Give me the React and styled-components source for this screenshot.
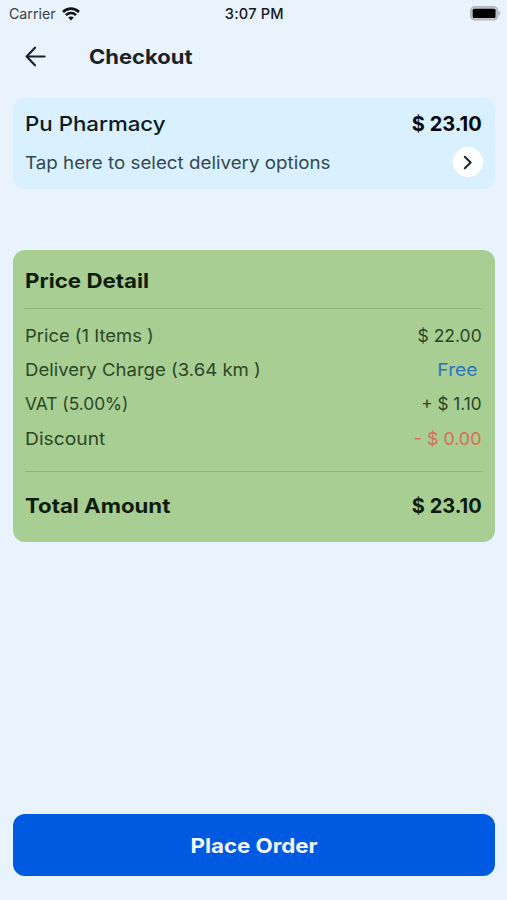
import React from 'react';
import styled, { createGlobalStyle } from 'styled-components';

const GlobalStyle = createGlobalStyle`
  * { box-sizing: border-box; }
  body { margin: 0; background: #e8f3fe; }
`;

const Screen = styled.main`
  display: flex;
  flex-direction: column;
  width: 100%;
  height: 100vh;
  min-height: 900px;
  padding: 0 12.5px 24.5px 13px;
  background: #e8f3fe;
  color: #202c31;
  font-family: Inter, "Noto Sans", sans-serif;
`;

const Text = styled.span`
  display: inline-block;
  font-size: ${(p) => p.$size || 17.5}px;
  font-weight: ${(p) => p.$weight || 400};
  letter-spacing: ${(p) => p.$track || 0}px;
  margin-right: ${(p) => -(p.$track || 0)}px;
  color: ${(p) => p.$color || 'inherit'};
  transform: scaleX(${(p) => p.$stretch || 1});
  transform-origin: ${(p) => p.$origin || 'left'} center;
  white-space: pre;
`;

const StatusBar = styled.div`
  display: grid;
  grid-template-columns: 1fr auto 1fr;
  align-items: center;
  height: 27px;
  margin: 0 -7px 0 -4px;
  color: #17191c;
`;

const Carrier = styled.div`
  display: flex;
  align-items: center;
  gap: 6px;
`;

const Clock = styled(Text)`
  margin-left: -2px;
`;

const Battery = styled.svg`
  justify-self: end;
`;

const Header = styled.header`
  display: flex;
  align-items: center;
  gap: 43px;
  height: 58px;
  padding-left: 12px;
  color: #1a2228;
`;

const BackButton = styled.button`
  display: flex;
  padding: 0;
  border: 0;
  background: none;
  color: inherit;
`;

const Title = styled(Text)`
  padding-top: 1px;
`;

const Card = styled.section`
  border-radius: 12px;
  padding: 0 12.8px 0 12.2px;
`;

const StoreCard = styled(Card)`
  height: 91px;
  margin-top: 13px;
  padding-top: 7px;
  background: #d8f0ff;
`;

const PriceCard = styled(Card)`
  height: 292px;
  margin-top: 61px;
  background: #a8ce93;
  color: #2a4726;
`;

const Row = styled.div`
  display: flex;
  align-items: center;
  justify-content: space-between;
  height: ${(p) => p.$height}px;
`;

const CardTitle = styled.div`
  height: 58px;
  padding-top: 18.5px;
`;

const Lines = styled.div`
  padding: 9.2px 0 15.9px;
  border-top: 1.5px solid #91b37f;
  border-bottom: 1.5px solid #91b37f;
`;

const FreeLabel = styled(Text)`
  margin-right: 4px;
`;

const NextButton = styled.button`
  display: flex;
  align-items: center;
  justify-content: center;
  width: 30px;
  height: 30px;
  margin-right: -1px;
  padding: 0;
  border: 0;
  border-radius: 50%;
  background: #fff;
  color: #202427;
`;

const PlaceOrder = styled.button`
  height: 61.5px;
  margin-top: auto;
  padding: 2px 0 0;
  border: 0;
  border-radius: 12px;
  background: #0059e1;
  color: #f4f9ff;
  font-family: inherit;
`;

const WifiIcon = () => (
  <svg width="19" height="14" viewBox="0 0 19 14" fill="none" stroke="#111316">
    <path d="M1 4.9C5.7.5 12.3.5 17 4.9" strokeWidth="2.7" />
    <path d="M3.9 8.1c2.9-2.7 7.3-2.7 10.2 0" strokeWidth="2.5" />
    <path d="M9 13.4 6.2 10.6c1.6-1.5 4-1.5 5.6 0z" fill="#111316" stroke="none" />
  </svg>
);

const lines = [
  { label: 'Price (1 Items )', stretch: 1.052, value: '$ 22.00', valueStretch: 1 },
  { label: 'Delivery Charge (3.64 km )', stretch: 1.06, free: true },
  { label: 'VAT (5.00%)', stretch: 0.99, value: '+ $ 1.10', valueStretch: 0.98 },
  { label: 'Discount', stretch: 1.1, value: '- $ 0.00', valueStretch: 1.02, color: '#db6b58' },
];

export default function App() {
  return (
    <Screen>
      <GlobalStyle />
      <StatusBar>
        <Carrier>
          <Text $size={14.2} $color="#3a4046">Carrier</Text>
          <WifiIcon />
        </Carrier>
        <Clock $size={14.6} $weight={500} $track={0.2}>3:07 PM</Clock>
        <Battery width="32" height="15" viewBox="0 0 32 15">
          <rect x="0.8" y="0.8" width="26.8" height="13" rx="4" fill="#c0c6ca" stroke="#b2b8bd" strokeWidth="1.5" />
          <rect x="2.7" y="2.7" width="22.8" height="9.2" rx="1.5" fill="#000" />
          <path d="M28.6 5.1c2.3.5 2.3 4.1 0 4.6z" fill="#a9b0b6" />
        </Battery>
      </StatusBar>
      <Header>
        <BackButton aria-label="Back">
          <svg width="21" height="21" viewBox="0 0 21 21" fill="none" stroke="currentColor" strokeWidth="2.2" strokeLinecap="round" strokeLinejoin="round">
            <path d="M19.6 10.5H1.9M10 1.7 1.6 10.5l8.4 8.8" />
          </svg>
        </BackButton>
        <Title $size={20} $weight={700} $stretch={1.1}>Checkout</Title>
      </Header>
      <StoreCard>
        <Row $height={37}>
          <Text $size={20} $weight={500} $stretch={1.114} $color="#101b20">Pu Pharmacy</Text>
          <Text $size={20} $weight={700} $origin="right" $color="#05090b">$ 23.10</Text>
        </Row>
        <Row $height={40}>
          <Text $stretch={1.072} $color="#324850">Tap here to select delivery options</Text>
          <NextButton aria-label="Delivery options">
            <svg width="10" height="15" viewBox="0 0 10 15" fill="none" stroke="currentColor" strokeWidth="2" strokeLinecap="round" strokeLinejoin="round">
              <path d="M1.8 1.7 7.7 7.5l-5.9 5.8" />
            </svg>
          </NextButton>
        </Row>
      </StoreCard>
      <PriceCard>
        <CardTitle>
          <Text $size={20} $weight={700} $stretch={1.115} $color="#0d1d0c">Price Detail</Text>
        </CardTitle>
        <Lines>
          {lines.map((line) => (
            <Row $height={34.3} key={line.label}>
              <Text $stretch={line.stretch}>{line.label}</Text>
              {line.free
                ? <FreeLabel $stretch={1.1} $origin="right" $color="#2b74bd">Free</FreeLabel>
                : <Text $stretch={line.valueStretch} $origin="right" $color={line.color}>{line.value}</Text>}
            </Row>
          ))}
        </Lines>
        <Row $height={67.5}>
          <Text $size={20} $weight={700} $stretch={1.11} $color="#0d1d0c">Total Amount</Text>
          <Text $size={20} $weight={700} $origin="right" $color="#0d1d0c">$ 23.10</Text>
        </Row>
      </PriceCard>
      <PlaceOrder>
        <Text $size={20} $weight={700} $stretch={1.115} $origin="center">Place Order</Text>
      </PlaceOrder>
    </Screen>
  );
}
